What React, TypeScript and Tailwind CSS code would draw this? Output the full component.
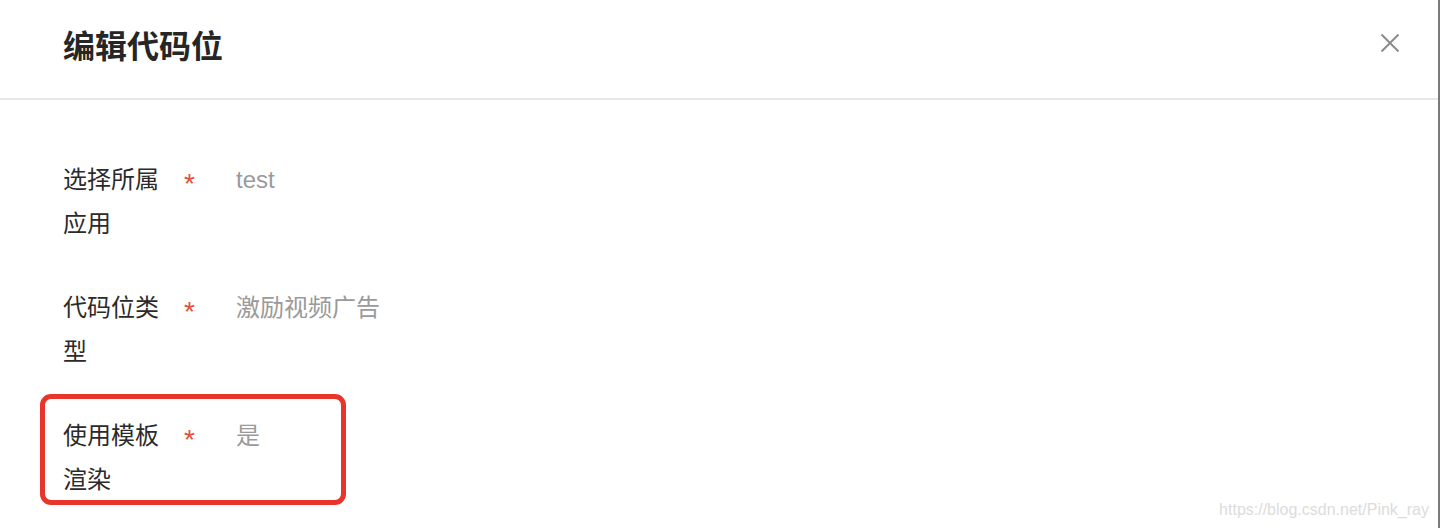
const rows = [
  { label: '选择所属应用', value: 'test', marked: false },
  { label: '代码位类型', value: '激励视频广告', marked: false },
  { label: '使用模板渲染', value: '是', marked: true },
];

export default function App() {
  return (
    <div
      className="flex w-[1440px] h-[528px] overflow-hidden bg-white"
      style={{ fontFamily: '"Liberation Sans", "Noto Sans CJK SC", sans-serif' }}
    >
      <div className="relative flex-1 flex flex-col">
        {/* Header */}
        <div className="h-[100px] flex items-center justify-between pl-[63px] pr-[38px] pb-[5px] border-b-2 border-[#e8e8e8]">
          <h1 className="text-[32px] leading-[40px] font-bold text-[#262626]">编辑代码位</h1>
          <svg width="20" height="20" viewBox="0 0 20 20" className="mb-[7px]">
            <path d="M1.5 1.5 L18.5 18.5 M18.5 1.5 L1.5 18.5" stroke="#8c8c8c" strokeWidth="2" fill="none" />
          </svg>
        </div>

        {/* Form */}
        <div className="flex flex-col gap-[40px] pt-[58px] pl-[63px]">
          {rows.map((row) => (
            <div key={row.label} className="relative flex text-[24px] leading-[44px]">
              {row.marked && (
                <div className="absolute -top-[20px] -left-[23px] w-[306px] h-[111px] rounded-[11px] border-[5px] border-[#e8342a]" />
              )}
              <div className="w-[96px] shrink-0 text-[#2b2b2b] break-all">{row.label}</div>
              <span className="ml-[25px] w-[52px] shrink-0 pt-[4px] text-[28px] leading-[44px] text-[#e54d3c]">*</span>
              <span className="text-[#9a9a9a]">{row.value}</span>
            </div>
          ))}
        </div>

        {/* Watermark */}
        <div className="absolute right-[9px] bottom-[8px] text-[16px] leading-[20px] text-[#dcdcdc]">
          https://blog.csdn.net/Pink_ray
        </div>
      </div>
      <div className="w-[2px] bg-[#7a7a7a]" />
    </div>
  );
}
